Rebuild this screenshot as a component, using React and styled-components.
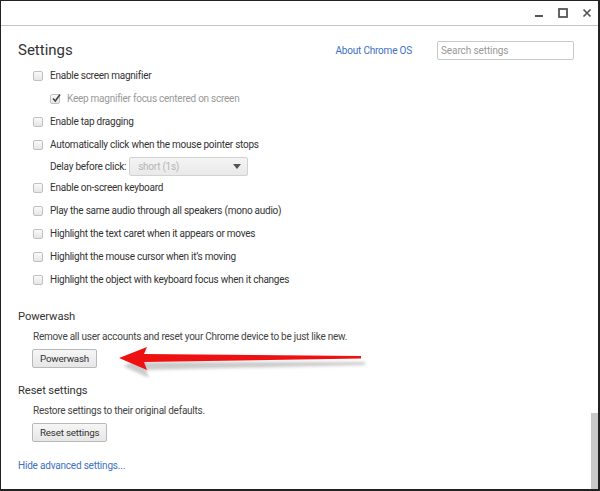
import React from 'react'
import styled, { createGlobalStyle } from 'styled-components'

const GlobalStyle = createGlobalStyle`
  html, body {
    margin: 0;
    padding: 0;
    background: #fff;
  }
  body {
    font-family: Roboto, "Noto Sans", Arial, sans-serif;
    color: #333;
  }
`

const Window = styled.div`
  position: relative;
  width: 600px;
  height: 491px;
  box-sizing: border-box;
  border: 1px solid #222;
  border-right-width: 2px;
  border-bottom-width: 2px;
  background: #fff;
  display: flex;
  flex-direction: column;
  overflow: hidden;
`

const TitleBar = styled.div`
  height: 24px;
  flex: none;
  border-bottom: 1px solid #c4c4c4;
  display: flex;
  justify-content: flex-end;
  align-items: center;
  gap: 10px;
  padding-right: 4px;
`

const WinButton = styled.div`
  width: 14px;
  height: 14px;
  display: flex;
  align-items: center;
  justify-content: center;
  svg { display: block; }
`

const Body = styled.div`
  flex: 1;
  display: flex;
  min-height: 0;
`

const Content = styled.div`
  flex: 1;
  padding: 14px 0 0 17px;
  display: flex;
  flex-direction: column;
`

const ScrollTrack = styled.div`
  width: 7px;
  flex: none;
  display: flex;
  flex-direction: column;
  justify-content: flex-end;
`

const ScrollThumb = styled.div`
  height: 76px;
  background: #c9c9c9;
`

const Header = styled.div`
  display: flex;
  align-items: center;
  height: 20px;
  padding-right: 17px;
`

const PageTitle = styled.h1`
  margin: 0;
  font-size: 15px;
  font-weight: 400;
  color: #333;
  flex: 1;
`

const Link = styled.a`
  color: #3d70c6;
  font-size: 10px;
  letter-spacing: -0.2px;
  text-decoration: none;
  margin-right: ${p => p.$gap || 0}px;
`

const Search = styled.input`
  box-sizing: border-box;
  width: 137px;
  height: 19px;
  border: 1px solid #c8c8c8;
  border-radius: 2px;
  padding: 0 3px;
  font-family: Roboto, Arial, sans-serif;
  font-size: 10px;
  letter-spacing: -0.1px;
  outline: none;
  &::placeholder { color: #999; }
`

const Options = styled.div`
  margin-top: 4px;
  display: flex;
  flex-direction: column;
  padding-left: 15px;
`

const Row = styled.div`
  height: ${p => p.$h || 23}px;
  display: flex;
  align-items: center;
  gap: 7px;
  padding-left: ${p => p.$indent || 0}px;
  font-size: 10px;
  letter-spacing: -0.25px;
  color: ${p => (p.$muted ? '#999' : '#333')};
  white-space: nowrap;
`

const Box = styled.span`
  box-sizing: border-box;
  width: 10px;
  height: 10px;
  flex: none;
  border: 1px solid #c0c0c0;
  border-radius: 2px;
  background: linear-gradient(#fafafa, #e6e6e6);
  position: relative;
  svg {
    position: absolute;
    left: 0;
    top: -2px;
  }
`

const Select = styled.div`
  box-sizing: border-box;
  width: 119px;
  height: 19px;
  border: 1px solid #d2d2d2;
  border-radius: 2px;
  background: linear-gradient(#f4f4f4, #e9e9e9);
  display: flex;
  align-items: center;
  justify-content: space-between;
  padding: 0 6px 0 8px;
  color: #b5b5b5;
  margin-left: -4px;
`

const Caret = styled.span`
  width: 0;
  height: 0;
  border-left: 4px solid transparent;
  border-right: 4px solid transparent;
  border-top: 5px solid #555;
`

const Section = styled.div`
  display: flex;
  flex-direction: column;
  margin-top: ${p => p.$top || 0}px;
`

const SectionTitle = styled.h2`
  margin: 0;
  font-size: 11.2px;
  letter-spacing: -0.1px;
  font-weight: 400;
  color: #333;
  line-height: 16px;
`

const Desc = styled.p`
  margin: 5px 0 0 15px;
  font-size: 10px;
  letter-spacing: -0.25px;
  color: #444;
  line-height: 14px;
`

const Button = styled.button`
  align-self: flex-start;
  box-sizing: border-box;
  height: 19px;
  margin: 5px 0 0 14px;
  padding: 0 7px;
  border: 1px solid #b9b9b9;
  border-radius: 2px;
  background: linear-gradient(#f6f6f6, #e6e6e6);
  font-family: Roboto, Arial, sans-serif;
  font-size: 9.8px;
  letter-spacing: -0.2px;
  color: #333;
`

const Footer = styled.div`
  margin-top: 12px;
`

const Arrow = styled.svg`
  position: absolute;
  left: 112px;
  top: 340px;
  pointer-events: none;
`

const options = [
  { label: 'Enable screen magnifier' },
  { label: 'Keep magnifier focus centered on screen', sub: true, checked: true },
  { label: 'Enable tap dragging' },
  { label: 'Automatically click when the mouse pointer stops' },
  { delay: true },
  { label: 'Enable on-screen keyboard' },
  { label: 'Play the same audio through all speakers (mono audio)' },
  { label: 'Highlight the text caret when it appears or moves' },
  { label: 'Highlight the mouse cursor when it\u2019s moving' },
  { label: 'Highlight the object with keyboard focus when it changes' },
]

function Check({ checked }) {
  return (
    <Box>
      {checked && (
        <svg width="11" height="11" viewBox="0 0 11 11">
          <path d="M2 5.5 L4.3 8 L9 1.5" fill="none" stroke="#444" strokeWidth="1.6" />
        </svg>
      )}
    </Box>
  )
}

function App() {
  return (
    <>
      <GlobalStyle />
      <Window>
        <TitleBar>
          <WinButton>
            <svg width="10" height="10" viewBox="0 0 10 10">
              <rect x="1" y="7" width="8" height="2" fill="#555" />
            </svg>
          </WinButton>
          <WinButton>
            <svg width="10" height="10" viewBox="0 0 10 10">
              <rect x="1" y="1" width="8" height="8" fill="none" stroke="#555" strokeWidth="1.8" />
            </svg>
          </WinButton>
          <WinButton>
            <svg width="10" height="10" viewBox="0 0 10 10">
              <path d="M1.5 1.5 L8.5 8.5 M8.5 1.5 L1.5 8.5" stroke="#555" strokeWidth="1.7" />
            </svg>
          </WinButton>
        </TitleBar>
        <Body>
          <Content>
            <Header>
              <PageTitle>Settings</PageTitle>
              <Link href="#" $gap={25}>About Chrome OS</Link>
              <Search placeholder="Search settings" />
            </Header>

            <Options>
              {options.map((o, i) =>
                o.delay ? (
                  <Row key={i} $indent={17} $h={20}>
                    Delay before click:
                    <Select>
                      short (1s)
                      <Caret />
                    </Select>
                  </Row>
                ) : (
                  <Row key={i} $indent={o.sub ? 17 : 0} $muted={o.sub}>
                    <Check checked={o.checked} />
                    {o.label}
                  </Row>
                )
              )}
            </Options>

            <Section $top={18}>
              <SectionTitle>Powerwash</SectionTitle>
              <Desc>Remove all user accounts and reset your Chrome device to be just like new.</Desc>
              <Button>Powerwash</Button>
            </Section>

            <Section $top={15}>
              <SectionTitle>Reset settings</SectionTitle>
              <Desc>Restore settings to their original defaults.</Desc>
              <Button>Reset settings</Button>
            </Section>

            <Footer>
              <Link href="#">Hide advanced settings...</Link>
            </Footer>
          </Content>
          <ScrollTrack>
            <ScrollThumb />
          </ScrollTrack>
        </Body>

        <Arrow width="260" height="40" viewBox="0 0 260 40">
          <defs>
            <filter id="blur" x="-10%" y="-50%" width="120%" height="200%">
              <feGaussianBlur stdDeviation="1.5" />
            </filter>
          </defs>
          <path
            d="M8 21 L34 10 L31 17 L250 17 L250 20 L31 25 L34 33 Z"
            fill="#999"
            opacity="0.5"
            filter="url(#blur)"
            transform="translate(2 4)"
          />
          <path d="M6 17 L34 6 L31 13 L248 15 L248 17.5 L31 21 L34 29 Z" fill="#ee1111" />
        </Arrow>
      </Window>
    </>
  )
}

export default App
